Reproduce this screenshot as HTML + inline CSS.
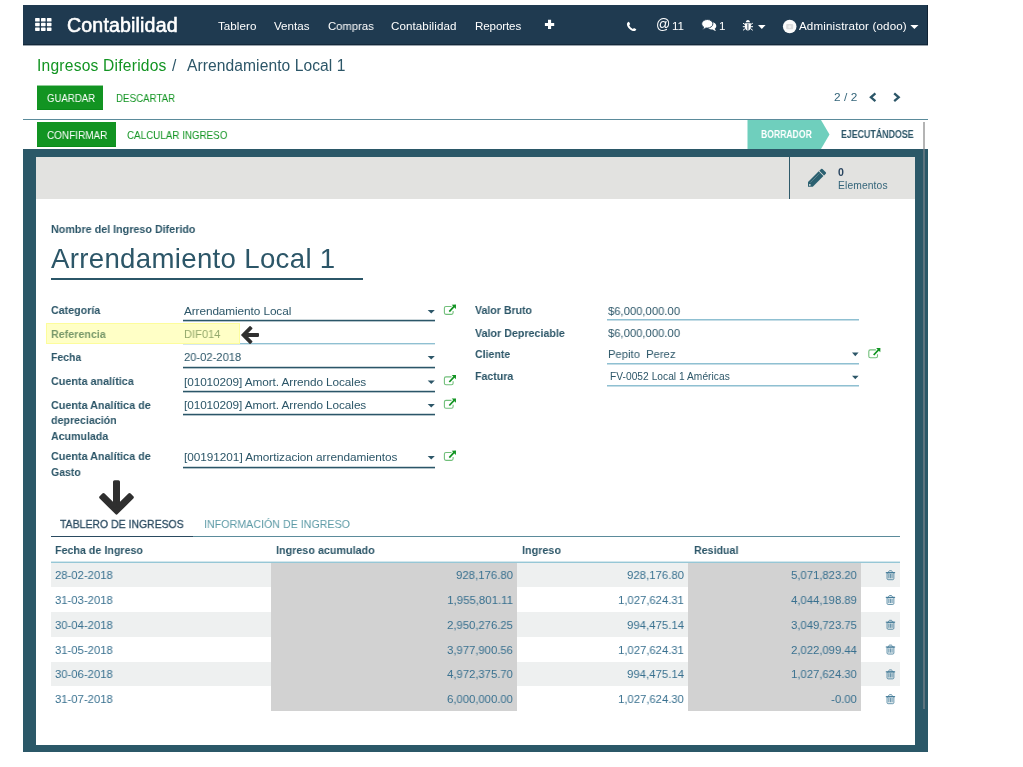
<!DOCTYPE html>
<html lang="es"><head><meta charset="utf-8"><title>Arrendamiento Local 1 - Odoo</title>
<style>
html,body{margin:0;padding:0;background:#fff;}
body{width:1023px;height:767px;position:relative;overflow:hidden;font-family:"Liberation Sans", sans-serif;}
.b{position:absolute;}
.t{position:absolute;will-change:transform;white-space:pre;line-height:24px;height:24px;margin:0;padding:0;text-decoration:none;display:block;}
svg{position:absolute;overflow:visible;}
</style></head><body>
<div class="bg">
<div class="b" style="left:23px;top:5px;width:905px;height:40px;background:#1f3a50;"></div>
<div class="b" style="left:23px;top:44px;width:905px;height:1px;background:#14293b;"></div>
<div class="b" style="left:927px;top:5px;width:1px;height:40px;background:#0f2234;"></div>
<div class="b" style="left:23px;top:45px;width:905px;height:1px;background:#9aa4ad;"></div>
<div class="b" style="left:23px;top:119px;width:905px;height:1px;background:#5b8b9b;"></div>
<div class="b" style="left:37px;top:86px;width:66px;height:24px;background:#129422;box-shadow:inset 0 -1px 0 #0a8a1a;"></div>
<div class="b" style="left:37px;top:85px;width:66px;height:1px;background:#8fcc97;"></div>
<div class="b" style="left:37px;top:122px;width:79px;height:25px;background:#129422;box-shadow:inset 0 -1px 0 #0a8a1a;"></div>
<svg style="left:747px;top:120px" width="84" height="29" viewBox="0 0 84 29"><path d="M0.5 0H74L82.5 14.5L74 29H0.5Z" fill="#6fcfbd"/></svg>
<div class="b" style="left:923px;top:122px;width:2px;height:27px;background:#b4b4b4;"></div>
<div class="b" style="left:23px;top:149px;width:905px;height:603px;background:#2b5868;"></div>
<div class="b" style="left:923px;top:149px;width:2px;height:560px;background:#5d737e;"></div>
<div class="b" style="left:36px;top:157px;width:879px;height:588px;background:#fff;"></div>
<div class="b" style="left:36px;top:157px;width:879px;height:42px;background:#e2e2e0;"></div>
<div class="b" style="left:789px;top:157px;width:1px;height:42px;background:#2f5a6a;"></div>
<div class="b" style="left:51px;top:278px;width:312px;height:2px;background:#2b5668;"></div>
<div class="b" style="left:183px;top:319px;width:252px;height:1px;background:#cdd8dc;"></div>
<div class="b" style="left:183px;top:320px;width:252px;height:1px;background:#2b5668;"></div>
<div class="b" style="left:183px;top:321px;width:252px;height:1px;background:#b3c3ca;"></div>
<div class="b" style="left:183px;top:366px;width:252px;height:1px;background:#cdd8dc;"></div>
<div class="b" style="left:183px;top:367px;width:252px;height:1px;background:#2b5668;"></div>
<div class="b" style="left:183px;top:368px;width:252px;height:1px;background:#b3c3ca;"></div>
<div class="b" style="left:183px;top:390px;width:252px;height:1px;background:#cdd8dc;"></div>
<div class="b" style="left:183px;top:391px;width:252px;height:1px;background:#2b5668;"></div>
<div class="b" style="left:183px;top:392px;width:252px;height:1px;background:#b3c3ca;"></div>
<div class="b" style="left:183px;top:413px;width:252px;height:1px;background:#cdd8dc;"></div>
<div class="b" style="left:183px;top:414px;width:252px;height:1px;background:#2b5668;"></div>
<div class="b" style="left:183px;top:415px;width:252px;height:1px;background:#b3c3ca;"></div>
<div class="b" style="left:183px;top:466px;width:252px;height:1px;background:#cdd8dc;"></div>
<div class="b" style="left:183px;top:467px;width:252px;height:1px;background:#2b5668;"></div>
<div class="b" style="left:183px;top:468px;width:252px;height:1px;background:#b3c3ca;"></div>
<div class="b" style="left:183px;top:343px;width:252px;height:1px;background:#8fc0d2;"></div>
<div class="b" style="left:183px;top:344px;width:252px;height:1px;background:#d5e6ec;"></div>
<div class="b" style="left:607px;top:319px;width:252px;height:1px;background:#8fc0d2;"></div>
<div class="b" style="left:607px;top:320px;width:252px;height:1px;background:#c5dde6;"></div>
<div class="b" style="left:607px;top:363px;width:252px;height:1px;background:#8fc0d2;"></div>
<div class="b" style="left:607px;top:364px;width:252px;height:1px;background:#c5dde6;"></div>
<div class="b" style="left:607px;top:385px;width:252px;height:1px;background:#8fc0d2;"></div>
<div class="b" style="left:607px;top:386px;width:252px;height:1px;background:#c5dde6;"></div>
<div class="b" style="left:46px;top:323px;width:194px;height:21px;background:#ffffc6;box-shadow:inset 0 0 0 1px #fdfd9c;"></div>
<div class="b" style="left:51px;top:536px;width:849px;height:1px;background:#5b8b9b;"></div>
<div class="b" style="left:51px;top:536px;width:142px;height:1px;background:#2a4a60;"></div>
<div class="b" style="left:51px;top:562.3px;width:849px;height:24.8px;background:#eef0f0;"></div>
<div class="b" style="left:51px;top:611.9px;width:849px;height:24.8px;background:#eef0f0;"></div>
<div class="b" style="left:51px;top:661.5px;width:849px;height:24.8px;background:#eef0f0;"></div>
<div class="b" style="left:271px;top:562px;width:246px;height:149px;background:#d2d2d2;"></div>
<div class="b" style="left:688px;top:562px;width:173px;height:149px;background:#d2d2d2;"></div>
<div class="b" style="left:51px;top:561px;width:849px;height:1px;background:#d3e7ed;"></div>
<div class="b" style="left:51px;top:562px;width:849px;height:1px;background:#96c7d6;"></div>
</div>
<svg width="1023" height="767" viewBox="0 0 1023 767" style="left:0;top:0">
<g fill="#fff"><rect x="35.1" y="18.1" width="4.6" height="3.4" rx="0.6"/><rect x="35.1" y="22.8" width="4.6" height="3.4" rx="0.6"/><rect x="35.1" y="27.5" width="4.6" height="3.4" rx="0.6"/><rect x="41" y="18.1" width="4.6" height="3.4" rx="0.6"/><rect x="41" y="22.8" width="4.6" height="3.4" rx="0.6"/><rect x="41" y="27.5" width="4.6" height="3.4" rx="0.6"/><rect x="46.9" y="18.1" width="4.6" height="3.4" rx="0.6"/><rect x="46.9" y="22.8" width="4.6" height="3.4" rx="0.6"/><rect x="46.9" y="27.5" width="4.6" height="3.4" rx="0.6"/></g>
<path d="M549.55 19.8V29.1M544.9 24.45H554.2" stroke="#fff" stroke-width="3.1" fill="none"/>
<g transform="translate(626.6 21.5)"><path d="M2.3 0.3C1.5 0.5 0.3 1.4 0.3 2.4C0.3 5.7 4.4 9.6 7.6 9.6C8.6 9.6 9.5 8.5 9.7 7.7L7.4 6.4L6.3 7.4C5 6.9 3.1 5 2.6 3.7L3.6 2.6Z" fill="#fff"/></g>
<g><path d="M711.8 22.3c2.5 0 4.5 1.6 4.5 3.6c0 1.1-.6 2.1-1.6 2.8c.2 .8 .7 1.5 1.3 2.1c-1.2 0-2.3-.5-3.2-1.3c-.3 0-.7 .1-1 .1c-2.5 0-4.5-1.6-4.5-3.6s2-3.7 4.500-3.700z" fill="#fff"/><path d="M707.300 19.500c3.100 0 5.600 1.900 5.600 4.300s-2.500 4.300-5.600 4.300c-.5 0-1 0-1.400-.1c-1 .8-2.200 1.300-3.600 1.400c.7-.6 1.200-1.400 1.400-2.300c-1.200-.8-2-2-2-3.300c0-2.400 2.500-4.300 5.600-4.300z" fill="#fff" stroke="#1f3a50" stroke-width="0.9"/></g>
<g stroke="#fff" stroke-width="1" fill="none"><path d="M743 23.200l2 1.300M752.800 23.200l-2 1.300M742.800 26.700h2.300M753 26.700h-2.300M743 30.300l2.100-1.600M752.800 30.300l-2.100-1.600"/></g><path d="M745.800 22.300c0-1.300 .9-2.300 2.100-2.300s2.100 1 2.100 2.300z" fill="#fff"/><path d="M744.900 23.300h6v3.600c0 2-1.300 3.500-3 3.500s-3-1.500-3-3.500z" fill="#fff"/><path d="M747.900 23.800v6" stroke="#1f3a50" stroke-width="0.9"/>
<path d="M758 24.900h7.600l-3.800 4.100zM910.300 24.900h8.200l-4.100 4.100z" fill="#fff"/>
<circle cx="789.700" cy="26.500" r="6.800" fill="#fbfbfb"/><rect x="786.200" y="24" width="7" height="5.200" rx="1" fill="#dcdcdc"/><circle cx="789.700" cy="26.700" r="1.500" fill="#efefef"/>
<path d="M875.400 93.400l-4.500 3.900l4.500 3.900M894.200 93.400l4.500 3.900l-4.500 3.900" stroke="#2c5668" stroke-width="2.300" fill="none"/>
<g transform="translate(808 186.800) rotate(-45)" fill="#2b6070"><path d="M0 0L3.400-3.350H18.500V3.350H3.400z"/><path d="M19.400-3.350h2.400a1 1 0 0 1 1 1v4.700a1 1 0 0 1-1 1h-2.400z"/><circle cx="2.600" cy="0" r="0.900" fill="#e2e2e0"/><path d="M5-1.300H17.500" stroke="#e2e2e0" stroke-width="0.500" stroke-dasharray="1 .6" opacity=".8"/></g>
<path d="M427.7 310H434.8L431.25 313.4z" fill="#2c5668"/><path d="M427.7 356H434.8L431.25 359.4z" fill="#2c5668"/><path d="M427.7 380.5H434.8L431.25 383.9z" fill="#2c5668"/><path d="M427.7 404H434.8L431.25 407.4z" fill="#2c5668"/><path d="M427.7 456H434.8L431.25 459.4z" fill="#2c5668"/><path d="M852 352.5H858.6L855.3 356.2z" fill="#2c5668"/><path d="M852 375.7H858.6L855.3 379.3z" fill="#2c5668"/>
<g transform="translate(0 0.6)"><path d="M451.500 305.900H446a1.600 1.600 0 0 0-1.600 1.600v4.700a1.600 1.600 0 0 0 1.600 1.600h5.500a1.600 1.600 0 0 0 1.600-1.600V310.300" fill="none" stroke="#129422" stroke-width="1.100" opacity=".6"/><path d="M449.300 311L454.300 305.600" stroke="#129422" stroke-width="1.700" fill="none"/><path d="M456 303.900l-4.300 .2l4.200 4.200z" fill="#129422"/></g><g transform="translate(0 71)"><path d="M451.500 305.900H446a1.600 1.600 0 0 0-1.600 1.600v4.700a1.600 1.600 0 0 0 1.600 1.600h5.500a1.600 1.600 0 0 0 1.600-1.600V310.300" fill="none" stroke="#129422" stroke-width="1.100" opacity=".6"/><path d="M449.300 311L454.300 305.600" stroke="#129422" stroke-width="1.700" fill="none"/><path d="M456 303.900l-4.300 .2l4.200 4.200z" fill="#129422"/></g><g transform="translate(0 94.5)"><path d="M451.500 305.900H446a1.600 1.600 0 0 0-1.600 1.600v4.700a1.600 1.600 0 0 0 1.600 1.600h5.500a1.600 1.600 0 0 0 1.600-1.600V310.300" fill="none" stroke="#129422" stroke-width="1.100" opacity=".6"/><path d="M449.300 311L454.300 305.600" stroke="#129422" stroke-width="1.700" fill="none"/><path d="M456 303.900l-4.300 .2l4.200 4.200z" fill="#129422"/></g><g transform="translate(0 146.6)"><path d="M451.500 305.900H446a1.600 1.600 0 0 0-1.600 1.600v4.700a1.600 1.600 0 0 0 1.600 1.600h5.500a1.600 1.600 0 0 0 1.600-1.600V310.300" fill="none" stroke="#129422" stroke-width="1.100" opacity=".6"/><path d="M449.300 311L454.300 305.600" stroke="#129422" stroke-width="1.700" fill="none"/><path d="M456 303.900l-4.300 .2l4.200 4.200z" fill="#129422"/></g><g transform="translate(424.4 44)"><path d="M451.500 305.900H446a1.600 1.600 0 0 0-1.600 1.600v4.700a1.600 1.600 0 0 0 1.600 1.600h5.500a1.600 1.600 0 0 0 1.600-1.600V310.300" fill="none" stroke="#129422" stroke-width="1.100" opacity=".6"/><path d="M449.300 311L454.300 305.600" stroke="#129422" stroke-width="1.700" fill="none"/><path d="M456 303.900l-4.300 .2l4.200 4.200z" fill="#129422"/></g>
<g transform="translate(0 0)" fill="none" stroke="#3f7896" stroke-width="1"><path d="M887 573v5.600c0 .6 .5 1.100 1.100 1.100h4.700c.6 0 1.100-.5 1.100-1.100v-6z" fill="#3f7896" fill-opacity=".13" stroke-opacity=".75"/><path d="M885.800 572.600h9.300" stroke-width="1.200" stroke-opacity=".9"/><path d="M888.500 572.400c0-1.100 .6-1.700 1.400-1.700h1.100c.8 0 1.400 .6 1.400 1.700" stroke-opacity=".8"/><path d="M888.850 574v4.200M890.450 574v4.200M892.050 574v4.200" stroke-width=".8" stroke-opacity=".95"/></g><g transform="translate(0 24.8)" fill="none" stroke="#3f7896" stroke-width="1"><path d="M887 573v5.600c0 .6 .5 1.100 1.100 1.100h4.700c.6 0 1.100-.5 1.100-1.100v-6z" fill="#3f7896" fill-opacity=".13" stroke-opacity=".75"/><path d="M885.800 572.600h9.300" stroke-width="1.200" stroke-opacity=".9"/><path d="M888.500 572.400c0-1.100 .6-1.700 1.400-1.700h1.100c.8 0 1.400 .6 1.400 1.700" stroke-opacity=".8"/><path d="M888.850 574v4.200M890.450 574v4.200M892.050 574v4.200" stroke-width=".8" stroke-opacity=".95"/></g><g transform="translate(0 49.6)" fill="none" stroke="#3f7896" stroke-width="1"><path d="M887 573v5.600c0 .6 .5 1.100 1.100 1.100h4.700c.6 0 1.100-.5 1.100-1.100v-6z" fill="#3f7896" fill-opacity=".13" stroke-opacity=".75"/><path d="M885.800 572.600h9.300" stroke-width="1.200" stroke-opacity=".9"/><path d="M888.500 572.400c0-1.100 .6-1.700 1.400-1.700h1.100c.8 0 1.400 .6 1.400 1.700" stroke-opacity=".8"/><path d="M888.850 574v4.200M890.450 574v4.200M892.050 574v4.200" stroke-width=".8" stroke-opacity=".95"/></g><g transform="translate(0 74.4)" fill="none" stroke="#3f7896" stroke-width="1"><path d="M887 573v5.600c0 .6 .5 1.100 1.100 1.100h4.700c.6 0 1.100-.5 1.100-1.100v-6z" fill="#3f7896" fill-opacity=".13" stroke-opacity=".75"/><path d="M885.800 572.600h9.300" stroke-width="1.200" stroke-opacity=".9"/><path d="M888.500 572.400c0-1.100 .6-1.700 1.400-1.700h1.100c.8 0 1.400 .6 1.400 1.700" stroke-opacity=".8"/><path d="M888.850 574v4.200M890.450 574v4.200M892.050 574v4.200" stroke-width=".8" stroke-opacity=".95"/></g><g transform="translate(0 99.2)" fill="none" stroke="#3f7896" stroke-width="1"><path d="M887 573v5.600c0 .6 .5 1.100 1.100 1.100h4.700c.6 0 1.100-.5 1.100-1.100v-6z" fill="#3f7896" fill-opacity=".13" stroke-opacity=".75"/><path d="M885.800 572.600h9.300" stroke-width="1.200" stroke-opacity=".9"/><path d="M888.500 572.400c0-1.100 .6-1.700 1.400-1.700h1.100c.8 0 1.400 .6 1.400 1.700" stroke-opacity=".8"/><path d="M888.850 574v4.200M890.450 574v4.200M892.050 574v4.200" stroke-width=".8" stroke-opacity=".95"/></g><g transform="translate(0 124)" fill="none" stroke="#3f7896" stroke-width="1"><path d="M887 573v5.600c0 .6 .5 1.100 1.100 1.100h4.700c.6 0 1.100-.5 1.100-1.100v-6z" fill="#3f7896" fill-opacity=".13" stroke-opacity=".75"/><path d="M885.800 572.600h9.300" stroke-width="1.200" stroke-opacity=".9"/><path d="M888.500 572.400c0-1.100 .6-1.700 1.400-1.700h1.100c.8 0 1.400 .6 1.400 1.700" stroke-opacity=".8"/><path d="M888.850 574v4.200M890.450 574v4.200M892.050 574v4.200" stroke-width=".8" stroke-opacity=".95"/></g>
<path transform="translate(243.5 335) rotate(90)" d="M-1.10 -14.70L1.10 -14.70L1.10 -2.66L6.56 -8.11L8.11 -6.56L0.00 1.56L-8.11 -6.56L-6.56 -8.11L-1.10 -2.66Z" fill="#303030" stroke="#303030" stroke-width="1.6" stroke-linejoin="round"/>
<path transform="translate(116.5 510.3) rotate(0)" d="M-1.90 -28.50L1.90 -28.50L1.90 -4.59L13.03 -15.71L15.71 -13.03L0.00 2.69L-15.71 -13.03L-13.03 -15.71L-1.90 -4.59Z" fill="#2f2f2f" stroke="#2f2f2f" stroke-width="3.2" stroke-linejoin="round"/>
</svg>
<nav class="o_main_navbar">
<a class="t" id="t0" style="font-size:19.6px;font-weight:400;color:#fff;top:13px;left:67.3px;letter-spacing:0.151px;-webkit-text-stroke:0.6px #fff;">Contabilidad</a>
<a class="t" id="t1" style="font-size:11.6px;font-weight:400;color:#fff;top:14px;left:217.5px;letter-spacing:0.061px;">Tablero</a>
<a class="t" id="t2" style="font-size:11.6px;font-weight:400;color:#fff;top:14px;left:273.6px;letter-spacing:0.026px;">Ventas</a>
<a class="t" id="t3" style="font-size:11.6px;font-weight:400;color:#fff;top:14px;left:327.6px;transform:scaleX(0.9735);transform-origin:0 50%;">Compras</a>
<a class="t" id="t4" style="font-size:11.6px;font-weight:400;color:#fff;top:14px;left:391.4px;letter-spacing:0.085px;">Contabilidad</a>
<a class="t" id="t5" style="font-size:11.6px;font-weight:400;color:#fff;top:14px;left:474.8px;letter-spacing:-0.121px;">Reportes</a>
<span class="t" id="t6" style="font-size:14.1px;font-weight:400;color:#fff;top:12px;left:655.9px;">@</span>
<span class="t" id="t7" style="font-size:11.6px;font-weight:400;color:#fff;top:14px;left:671.7px;">11</span>
<span class="t" id="t8" style="font-size:11.6px;font-weight:400;color:#fff;top:14px;left:719.3px;">1</span>
<span class="t" id="t9" style="font-size:11.6px;font-weight:400;color:#fff;top:14px;left:799.3px;letter-spacing:0.140px;">Administrator (odoo)</span>
</nav>
<header class="o_control_panel">
<a class="t" id="t10" style="font-size:15.6px;font-weight:400;color:#129422;top:54px;left:36.8px;letter-spacing:0.219px;">Ingresos Diferidos</a>
<span class="t" id="t11" style="font-size:15.6px;font-weight:400;color:#2c5668;top:54px;left:172.2px;">/</span>
<span class="t" id="t12" style="font-size:15.6px;font-weight:400;color:#2c5668;top:54px;left:187.2px;letter-spacing:0.080px;">Arrendamiento Local 1</span>
<span class="t" id="t13" style="font-size:10.9px;font-weight:400;color:#fff;top:86px;left:46.6px;transform:scaleX(0.8849);transform-origin:0 50%;">GUARDAR</span>
<span class="t" id="t14" style="font-size:10.9px;font-weight:400;color:#129422;top:86px;left:115.7px;transform:scaleX(0.8946);transform-origin:0 50%;">DESCARTAR</span>
<span class="t" id="t15" style="font-size:11.8px;font-weight:400;color:#34657a;top:85px;left:833.75px;letter-spacing:0.083px;">2 / 2</span>
</header>
<div class="o_form_statusbar">
<span class="t" id="t16" style="font-size:10.9px;font-weight:400;color:#fff;top:123px;left:46.6px;transform:scaleX(0.9158);transform-origin:0 50%;">CONFIRMAR</span>
<span class="t" id="t17" style="font-size:10.9px;font-weight:400;color:#129422;top:123px;left:127px;transform:scaleX(0.9016);transform-origin:0 50%;">CALCULAR INGRESO</span>
<span class="t" id="t18" style="font-size:10.2px;font-weight:700;color:#fff;top:123px;left:761px;transform:scaleX(0.8458);transform-origin:0 50%;">BORRADOR</span>
<span class="t" id="t19" style="font-size:10.2px;font-weight:700;color:#2c5668;top:123px;left:841.25px;transform:scaleX(0.8653);transform-origin:0 50%;">EJECUTÁNDOSE</span>
</div>
<div class="oe_button_box">
<span class="t" id="t20" style="font-size:10.6px;font-weight:700;color:#2a4560;top:160px;left:837.9px;">0</span>
<span class="t" id="t21" style="font-size:10.3px;font-weight:400;color:#34657a;top:174px;left:837.9px;letter-spacing:0.118px;">Elementos</span>
</div>
<div class="oe_title">
<label class="t" id="t22" style="font-size:11.2px;font-weight:700;color:#2c5668;top:217px;left:51px;transform:scaleX(0.9605);transform-origin:0 50%;">Nombre del Ingreso Diferido</label>
<span class="t" id="t23" style="font-size:27.6px;font-weight:400;color:#2c5668;top:247px;left:51px;letter-spacing:0.328px;">Arrendamiento Local 1</span>
</div>
<section class="o_group_left">
<label class="t" id="t24" style="font-size:11.8px;font-weight:700;color:#2c5668;top:298px;left:51px;transform:scaleX(0.9059);transform-origin:0 50%;">Categoría</label>
<label class="t" id="t25" style="font-size:11.8px;font-weight:700;color:#78986a;top:322px;left:51px;transform:scaleX(0.9075);transform-origin:0 50%;">Referencia</label>
<label class="t" id="t26" style="font-size:11.8px;font-weight:700;color:#2c5668;top:345px;left:51px;transform:scaleX(0.8869);transform-origin:0 50%;">Fecha</label>
<label class="t" id="t27" style="font-size:11.8px;font-weight:700;color:#2c5668;top:369px;left:51px;transform:scaleX(0.9145);transform-origin:0 50%;">Cuenta analítica</label>
<label class="t" id="t28" style="font-size:11.8px;font-weight:700;color:#2c5668;top:393px;left:51px;transform:scaleX(0.9147);transform-origin:0 50%;">Cuenta Analítica de</label>
<label class="t" id="t29" style="font-size:11.8px;font-weight:700;color:#2c5668;top:408px;left:51px;transform:scaleX(0.9034);transform-origin:0 50%;">depreciación</label>
<label class="t" id="t30" style="font-size:11.8px;font-weight:700;color:#2c5668;top:424px;left:51px;transform:scaleX(0.9002);transform-origin:0 50%;">Acumulada</label>
<label class="t" id="t31" style="font-size:11.8px;font-weight:700;color:#2c5668;top:444px;left:51px;transform:scaleX(0.9147);transform-origin:0 50%;">Cuenta Analítica de</label>
<label class="t" id="t32" style="font-size:11.8px;font-weight:700;color:#2c5668;top:460px;left:51px;transform:scaleX(0.8897);transform-origin:0 50%;">Gasto</label>
<span class="t" id="t33" style="font-size:11.8px;font-weight:400;color:#2c5668;top:299px;left:183.5px;letter-spacing:-0.089px;">Arrendamiento Local</span>
<span class="t" id="t34" style="font-size:11.8px;font-weight:400;color:#93a86c;top:322px;left:183.5px;transform:scaleX(0.9435);transform-origin:0 50%;">DIF014</span>
<span class="t" id="t35" style="font-size:11.8px;font-weight:400;color:#2c5668;top:345px;left:183.5px;transform:scaleX(0.9485);transform-origin:0 50%;">20-02-2018</span>
<span class="t" id="t36" style="font-size:11.8px;font-weight:400;color:#2c5668;top:370px;left:183.5px;letter-spacing:-0.084px;">[01010209] Amort. Arrendo Locales</span>
<span class="t" id="t37" style="font-size:11.8px;font-weight:400;color:#2c5668;top:393px;left:183.5px;letter-spacing:-0.084px;">[01010209] Amort. Arrendo Locales</span>
<span class="t" id="t38" style="font-size:11.8px;font-weight:400;color:#2c5668;top:445px;left:183.5px;letter-spacing:-0.043px;">[00191201] Amortizacion arrendamientos</span>
</section>
<section class="o_group_right">
<label class="t" id="t39" style="font-size:11.8px;font-weight:700;color:#2c5668;top:298px;left:474.8px;transform:scaleX(0.8963);transform-origin:0 50%;">Valor Bruto</label>
<label class="t" id="t40" style="font-size:11.8px;font-weight:700;color:#2c5668;top:321px;left:474.8px;transform:scaleX(0.9064);transform-origin:0 50%;">Valor Depreciable</label>
<label class="t" id="t41" style="font-size:11.8px;font-weight:700;color:#2c5668;top:342px;left:474.8px;transform:scaleX(0.8959);transform-origin:0 50%;">Cliente</label>
<label class="t" id="t42" style="font-size:11.8px;font-weight:700;color:#2c5668;top:364px;left:474.8px;transform:scaleX(0.8974);transform-origin:0 50%;">Factura</label>
<span class="t" id="t43" style="font-size:11.8px;font-weight:400;color:#2c5668;top:299px;left:607.5px;transform:scaleX(0.9542);transform-origin:0 50%;">$6,000,000.00</span>
<span class="t" id="t44" style="font-size:11.8px;font-weight:400;color:#2c5668;top:321px;left:607.5px;transform:scaleX(0.9542);transform-origin:0 50%;">$6,000,000.00</span>
<span class="t" id="t45" style="font-size:11.8px;font-weight:400;color:#2c5668;top:342px;left:607.5px;transform:scaleX(0.9530);transform-origin:0 50%;">Pepito  Perez</span>
<span class="t" id="t46" style="font-size:10.2px;font-weight:400;color:#2c5668;top:365px;left:609.5px;letter-spacing:0.036px;">FV-0052 Local 1 Américas</span>
</section>
<div class="o_notebook_tabs">
<a class="t" id="t47" style="font-size:11.8px;font-weight:400;color:#2a4a60;top:512px;left:60px;transform:scaleX(0.8876);transform-origin:0 50%;-webkit-text-stroke:0.3px #2a4a60;">TABLERO DE INGRESOS</a>
<a class="t" id="t48" style="font-size:11.8px;font-weight:400;color:#5c9aa6;top:512px;left:204px;transform:scaleX(0.9055);transform-origin:0 50%;">INFORMACIÓN DE INGRESO</a>
</div>
<div class="o_list_view">
<div class="t" id="t49" style="font-size:11.8px;font-weight:700;color:#2c5668;top:538px;left:54.6px;transform:scaleX(0.9069);transform-origin:0 50%;">Fecha de Ingreso</div>
<div class="t" id="t50" style="font-size:11.8px;font-weight:700;color:#2c5668;top:538px;left:276px;transform:scaleX(0.9124);transform-origin:0 50%;">Ingreso acumulado</div>
<div class="t" id="t51" style="font-size:11.8px;font-weight:700;color:#2c5668;top:538px;left:521.6px;transform:scaleX(0.9153);transform-origin:0 50%;">Ingreso</div>
<div class="t" id="t52" style="font-size:11.8px;font-weight:700;color:#2c5668;top:538px;left:693.6px;transform:scaleX(0.9030);transform-origin:0 50%;">Residual</div>
<div class="t" id="t53" style="font-size:11.8px;font-weight:400;color:#38708f;top:563px;left:54.8px;transform:scaleX(0.9576);transform-origin:0 50%;">28-02-2018</div>
<div class="t" id="t54" style="font-size:11.8px;font-weight:400;color:#38708f;top:563px;right:510px;transform:scaleX(0.9653);transform-origin:100% 50%;">928,176.80</div>
<div class="t" id="t55" style="font-size:11.8px;font-weight:400;color:#38708f;top:563px;right:339px;transform:scaleX(0.9653);transform-origin:100% 50%;">928,176.80</div>
<div class="t" id="t56" style="font-size:11.8px;font-weight:400;color:#38708f;top:563px;right:166.4px;transform:scaleX(0.9551);transform-origin:100% 50%;">5,071,823.20</div>
<div class="t" id="t57" style="font-size:11.8px;font-weight:400;color:#38708f;top:588px;left:54.8px;transform:scaleX(0.9576);transform-origin:0 50%;">31-03-2018</div>
<div class="t" id="t58" style="font-size:11.8px;font-weight:400;color:#38708f;top:588px;right:510px;transform:scaleX(0.9674);transform-origin:100% 50%;">1,955,801.11</div>
<div class="t" id="t59" style="font-size:11.8px;font-weight:400;color:#38708f;top:588px;right:339px;transform:scaleX(0.9551);transform-origin:100% 50%;">1,027,624.31</div>
<div class="t" id="t60" style="font-size:11.8px;font-weight:400;color:#38708f;top:588px;right:166.4px;transform:scaleX(0.9551);transform-origin:100% 50%;">4,044,198.89</div>
<div class="t" id="t61" style="font-size:11.8px;font-weight:400;color:#38708f;top:613px;left:54.8px;transform:scaleX(0.9576);transform-origin:0 50%;">30-04-2018</div>
<div class="t" id="t62" style="font-size:11.8px;font-weight:400;color:#38708f;top:613px;right:510px;transform:scaleX(0.9551);transform-origin:100% 50%;">2,950,276.25</div>
<div class="t" id="t63" style="font-size:11.8px;font-weight:400;color:#38708f;top:613px;right:339px;transform:scaleX(0.9653);transform-origin:100% 50%;">994,475.14</div>
<div class="t" id="t64" style="font-size:11.8px;font-weight:400;color:#38708f;top:613px;right:166.4px;transform:scaleX(0.9551);transform-origin:100% 50%;">3,049,723.75</div>
<div class="t" id="t65" style="font-size:11.8px;font-weight:400;color:#38708f;top:638px;left:54.8px;transform:scaleX(0.9576);transform-origin:0 50%;">31-05-2018</div>
<div class="t" id="t66" style="font-size:11.8px;font-weight:400;color:#38708f;top:638px;right:510px;transform:scaleX(0.9551);transform-origin:100% 50%;">3,977,900.56</div>
<div class="t" id="t67" style="font-size:11.8px;font-weight:400;color:#38708f;top:638px;right:339px;transform:scaleX(0.9551);transform-origin:100% 50%;">1,027,624.31</div>
<div class="t" id="t68" style="font-size:11.8px;font-weight:400;color:#38708f;top:638px;right:166.4px;transform:scaleX(0.9551);transform-origin:100% 50%;">2,022,099.44</div>
<div class="t" id="t69" style="font-size:11.8px;font-weight:400;color:#38708f;top:662px;left:54.8px;transform:scaleX(0.9576);transform-origin:0 50%;">30-06-2018</div>
<div class="t" id="t70" style="font-size:11.8px;font-weight:400;color:#38708f;top:662px;right:510px;transform:scaleX(0.9551);transform-origin:100% 50%;">4,972,375.70</div>
<div class="t" id="t71" style="font-size:11.8px;font-weight:400;color:#38708f;top:662px;right:339px;transform:scaleX(0.9653);transform-origin:100% 50%;">994,475.14</div>
<div class="t" id="t72" style="font-size:11.8px;font-weight:400;color:#38708f;top:662px;right:166.4px;transform:scaleX(0.9551);transform-origin:100% 50%;">1,027,624.30</div>
<div class="t" id="t73" style="font-size:11.8px;font-weight:400;color:#38708f;top:687px;left:54.8px;transform:scaleX(0.9576);transform-origin:0 50%;">31-07-2018</div>
<div class="t" id="t74" style="font-size:11.8px;font-weight:400;color:#38708f;top:687px;right:510px;transform:scaleX(0.9551);transform-origin:100% 50%;">6,000,000.00</div>
<div class="t" id="t75" style="font-size:11.8px;font-weight:400;color:#38708f;top:687px;right:339px;transform:scaleX(0.9551);transform-origin:100% 50%;">1,027,624.30</div>
<div class="t" id="t76" style="font-size:11.8px;font-weight:400;color:#38708f;top:687px;right:166.4px;transform:scaleX(0.9594);transform-origin:100% 50%;">-0.00</div>
</div>
</body></html>
